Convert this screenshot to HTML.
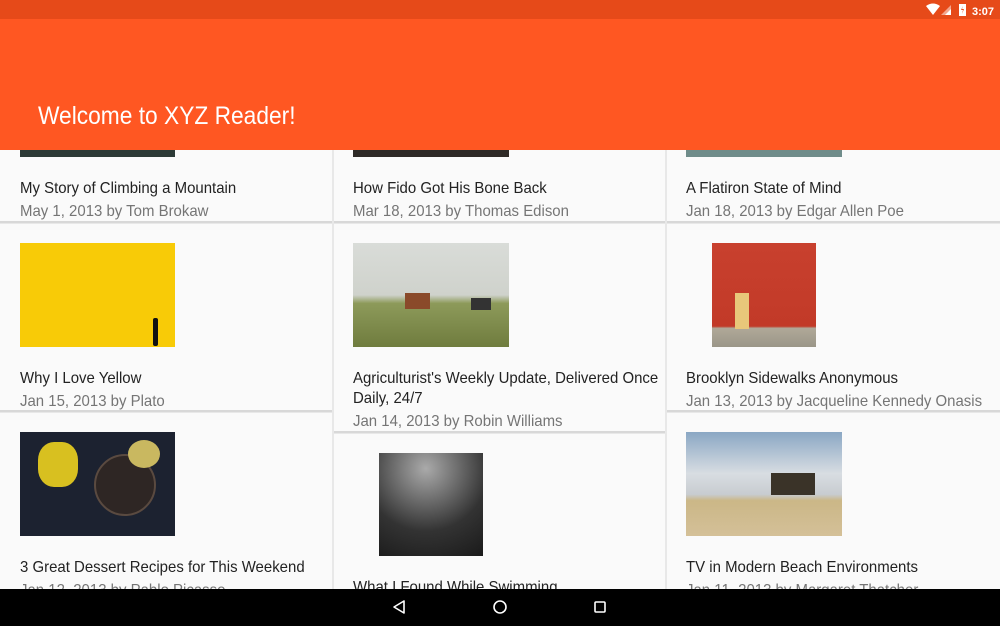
<!DOCTYPE html>
<html><head><meta charset="utf-8"><style>
*{margin:0;padding:0;box-sizing:border-box}
body{width:1000px;height:626px;overflow:hidden;background:#e8e8e8;position:relative;font-family:"Liberation Sans",sans-serif}
.a{position:absolute}
.card{position:absolute;background:#fafafa;border-bottom:2px solid #d8d8d8}
.t,.m{position:absolute;font-size:16px;line-height:20px;white-space:nowrap;transform:scaleX(0.935);transform-origin:0 0}
.t{color:#222}
.m{color:#757575}
</style></head><body>
<div class="card" style="left:0;top:140px;width:332px;height:83px"></div>
<div class="card" style="left:334px;top:140px;width:331px;height:83px"></div>
<div class="card" style="left:667px;top:140px;width:333px;height:83px"></div>
<div class="card" style="left:0;top:224px;width:332px;height:188px"></div>
<div class="card" style="left:334px;top:224px;width:331px;height:209px"></div>
<div class="card" style="left:667px;top:224px;width:333px;height:188px"></div>
<div class="card" style="left:0;top:413px;width:332px;height:213px"></div>
<div class="card" style="left:334px;top:434px;width:331px;height:192px"></div>
<div class="card" style="left:667px;top:413px;width:333px;height:213px"></div>

<div class="a" style="left:20px;top:140px;width:155px;height:17px;background:#2c3a36"></div>
<div class="a" style="left:353px;top:140px;width:156px;height:17px;background:#2e2a26"></div>
<div class="a" style="left:686px;top:140px;width:156px;height:17px;background:#6f8c8a"></div>
<div class="t" style="left:20px;top:179px">My Story of Climbing a Mountain</div>
<div class="m" style="left:20px;top:202px">May 1, 2013 by Tom Brokaw</div>
<div class="t" style="left:353px;top:179px">How Fido Got His Bone Back</div>
<div class="m" style="left:353px;top:202px">Mar 18, 2013 by Thomas Edison</div>
<div class="t" style="left:686px;top:179px">A Flatiron State of Mind</div>
<div class="m" style="left:686px;top:202px">Jan 18, 2013 by Edgar Allen Poe</div>

<div class="a" style="left:20px;top:243px;width:155px;height:104px;background:#f8cb07"><div class="a" style="left:133px;top:75px;width:5px;height:28px;background:#111;border-radius:2px"></div></div>
<div class="a" style="left:353px;top:243px;width:156px;height:104px;background:linear-gradient(#d9dcd8 0%,#cfd2cc 50%,#8d9a5a 58%,#6f7c3e 100%)"><div class="a" style="left:52px;top:50px;width:25px;height:16px;background:#8a4a2a"></div><div class="a" style="left:118px;top:55px;width:20px;height:12px;background:#333"></div></div>
<div class="a" style="left:712px;top:243px;width:104px;height:104px;background:linear-gradient(#c8402e 0%,#c23a28 80%,#b0a898 82%,#9a9688 100%)"><div class="a" style="left:23px;top:50px;width:14px;height:36px;background:#e8c77a"></div></div>
<div class="t" style="left:20px;top:369px">Why I Love Yellow</div>
<div class="m" style="left:20px;top:392px">Jan 15, 2013 by Plato</div>
<div class="t" style="left:353px;top:369px">Agriculturist's Weekly Update, Delivered Once</div>
<div class="t" style="left:353px;top:389px">Daily, 24/7</div>
<div class="m" style="left:353px;top:412px">Jan 14, 2013 by Robin Williams</div>
<div class="t" style="left:686px;top:369px">Brooklyn Sidewalks Anonymous</div>
<div class="m" style="left:686px;top:392px">Jan 13, 2013 by Jacqueline Kennedy Onasis</div>

<div class="a" style="left:20px;top:432px;width:155px;height:104px;background:#1c2230"><div class="a" style="left:18px;top:10px;width:40px;height:45px;background:#d8c020;border-radius:40%"></div><div class="a" style="left:74px;top:22px;width:62px;height:62px;border-radius:50%;background:#2e2624;border:2px solid #5a4a40"></div><div class="a" style="left:108px;top:8px;width:32px;height:28px;background:#c9b860;border-radius:50%"></div></div>
<div class="a" style="left:379px;top:453px;width:104px;height:103px;background:radial-gradient(circle at 45% 15%,#aaa,#333 60%,#1a1a1a)"></div>
<div class="a" style="left:686px;top:432px;width:156px;height:104px;background:linear-gradient(#8aa7c4 0%,#d8dde2 40%,#c8ccd0 60%,#cbb787 66%,#d4c098 100%)"><div class="a" style="left:85px;top:41px;width:44px;height:22px;background:#3a3328"></div></div>
<div class="t" style="left:20px;top:558px">3 Great Dessert Recipes for This Weekend</div>
<div class="m" style="left:20px;top:581px">Jan 12, 2013 by Pablo Picasso</div>
<div class="t" style="left:353px;top:578px">What I Found While Swimming</div>
<div class="t" style="left:686px;top:558px">TV in Modern Beach Environments</div>
<div class="m" style="left:686px;top:581px">Jan 11, 2013 by Margaret Thatcher</div>

<div class="a" style="left:0;top:0;width:1000px;height:19px;background:#e64a19"></div>
<div class="a" style="left:0;top:19px;width:1000px;height:131px;background:#ff5722"></div>
<div class="a" style="left:38px;top:100px;font-size:25px;color:#fff;line-height:32px;white-space:nowrap;transform:scaleX(0.91);transform-origin:0 0">Welcome to XYZ Reader!</div>
<svg class="a" style="left:925px;top:3px" width="75" height="14" viewBox="0 0 75 14">
<path d="M1 3 Q8 -2 15 3 L8 12 Z" fill="#fff"/>
<path d="M26 2 L26 12 L16 12 Z" fill="#fff" opacity=".5"/>
<path d="M20 12 L26 6 L26 12 Z" fill="#fff"/>
<rect x="34" y="1" width="7" height="12" fill="#fff"/>
<path d="M38 3 L36 7 L38 7 L37 11 L39 6 L37 6 Z" fill="#e64a19"/>
<text x="47" y="12" font-family="Liberation Sans" font-weight="bold" font-size="11" fill="#fff">3:07</text>
</svg>

<div class="a" style="left:0;top:589px;width:1000px;height:37px;background:#000"></div>
<svg class="a" style="left:0;top:589px" width="1000" height="37">
<path d="M404 12 L404 24 L394 18 Z" fill="none" stroke="#fff" stroke-width="1.6" stroke-linejoin="round"/>
<circle cx="500" cy="18" r="6" fill="none" stroke="#fff" stroke-width="1.6"/>
<rect x="595" y="13" width="10" height="10" fill="none" stroke="#fff" stroke-width="1.6" rx="1"/>
</svg>
</body></html>
